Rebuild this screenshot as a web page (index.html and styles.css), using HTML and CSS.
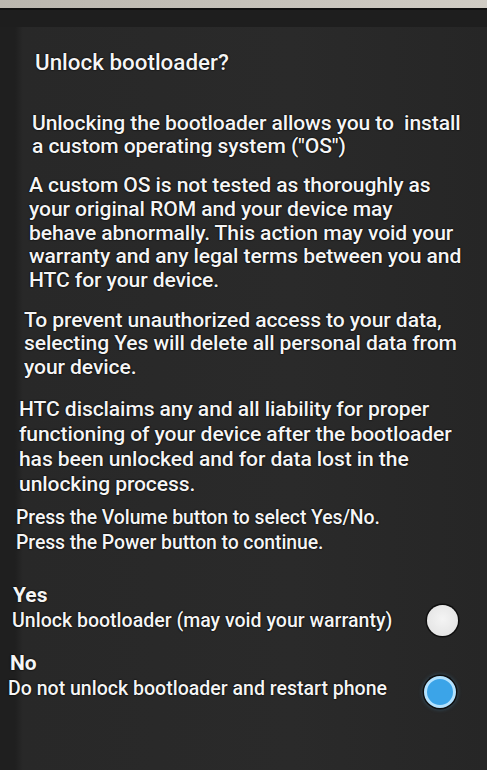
FILE: index.html
```html
<!DOCTYPE html>
<html>
<head>
<meta charset="utf-8">
<link rel="stylesheet" href="styles.css">
</head>
<body>
<div class="strip"></div>
<div class="screen">
  <h1 class="title">Unlock bootloader?</h1>
  <p class="para p1">Unlocking the bootloader allows you to&nbsp; install<br>a custom operating system ("OS")</p>
  <p class="para p2">A custom OS is not tested as thoroughly as<br>your original ROM and your device may<br>behave abnormally. This action may void your<br>warranty and any legal terms between you and<br>HTC for your device.</p>
  <p class="para p3">To prevent unauthorized access to your data,<br>selecting Yes will delete all personal data from<br>your device.</p>
  <p class="para p4">HTC disclaims any and all liability for proper<br>functioning of your device after the bootloader<br>has been unlocked and for data lost in the<br>unlocking process.</p>
  <p class="para p5">Press the Volume button to select Yes/No.<br>Press the Power button to continue.</p>
  <div class="options">
    <div class="option opt-yes">
      <div class="opt-label">Yes</div>
      <div class="opt-row">
        <span class="opt-desc">Unlock bootloader (may void your warranty)</span>
        <span class="radio radio-off"></span>
      </div>
    </div>
    <div class="option opt-no">
      <div class="opt-label">No</div>
      <div class="opt-row">
        <span class="opt-desc">Do not unlock bootloader and restart phone</span>
        <span class="radio radio-on"></span>
      </div>
    </div>
  </div>
</div>
</body>
</html>
```

FILE: styles.css
```css
html, body {
  margin: 0;
  padding: 0;
}
body {
  width: 487px;
  height: 770px;
  overflow: hidden;
  background: #1e1e1e;
  font-family: Roboto, "Open Sans", "Liberation Sans", sans-serif;
  color: #f5f5f5;
}
.strip {
  height: 8px;
  background: linear-gradient(to right, #bab6ae, #d0ccc4);
  border-bottom: 2px solid #111;
}
.screen {
  margin-top: 17px;
  height: 743px;
  box-sizing: border-box;
  padding-top: 23px;
  background: linear-gradient(to right, #1f1f1f 0, #1f1f1f 15px, #282828 23px, #2a2a2a 60%, #262626 100%);
  text-shadow: 0 0 2px #000, 0 0 1px #000;
}
.title {
  margin: 0 0 37px 35px;
  font-size: 22.4px;
  font-weight: 500;
  line-height: 24px;
}
.para {
  margin: 0;
  font-size: 21.1px;
  font-weight: 500;
  line-height: 23px;
  letter-spacing: -0.1px;
}
.p1 { margin-left: 32px; margin-bottom: 16px; }
.p2 { margin-left: 29px; margin-bottom: 16px; line-height: 23.75px; }
.p3 { margin-left: 24px; margin-bottom: 17.5px; line-height: 23.5px; }
.p4 { margin-left: 19px; margin-bottom: 9px; line-height: 25px; }
.p5 { margin-left: 16px; font-size: 19.45px; line-height: 25px; }
.options {
  padding-top: 28px;
}
.opt-yes { padding: 0 29px 0 12px; margin-bottom: 18px; }
.opt-no { padding: 0 31px 0 8px; }
.opt-label {
  font-size: 21px;
  font-weight: 700;
  line-height: 25px;
  padding-left: 1px;
}
.opt-no .opt-label { padding-left: 2px; }
.opt-row {
  display: flex;
  align-items: center;
  justify-content: space-between;
  height: 25px;
}
.opt-desc {
  font-size: 19.55px;
  font-weight: 500;
  line-height: 25px;
}
.radio {
  width: 31px;
  height: 31px;
  border-radius: 50%;
  box-sizing: border-box;
  flex: none;
  margin: -3px 0 -3px 0;
}
.radio-off {
  background: radial-gradient(circle at 50% 45%, #f4f4f4 0, #e6e6e6 70%, #dadada 100%);
  box-shadow: 0 0 0 1.5px #0e0e0e;
}
.opt-no .radio {
  margin-top: 4px;
  width: 32px;
  height: 32px;
}
.radio-on {
  background: #3ba4e8;
  border: 3px solid #b3e2ff;
  box-shadow: 0 0 0 1.5px #0e0e0e, 0 0 5px rgba(90, 190, 255, 0.6);
}
```
